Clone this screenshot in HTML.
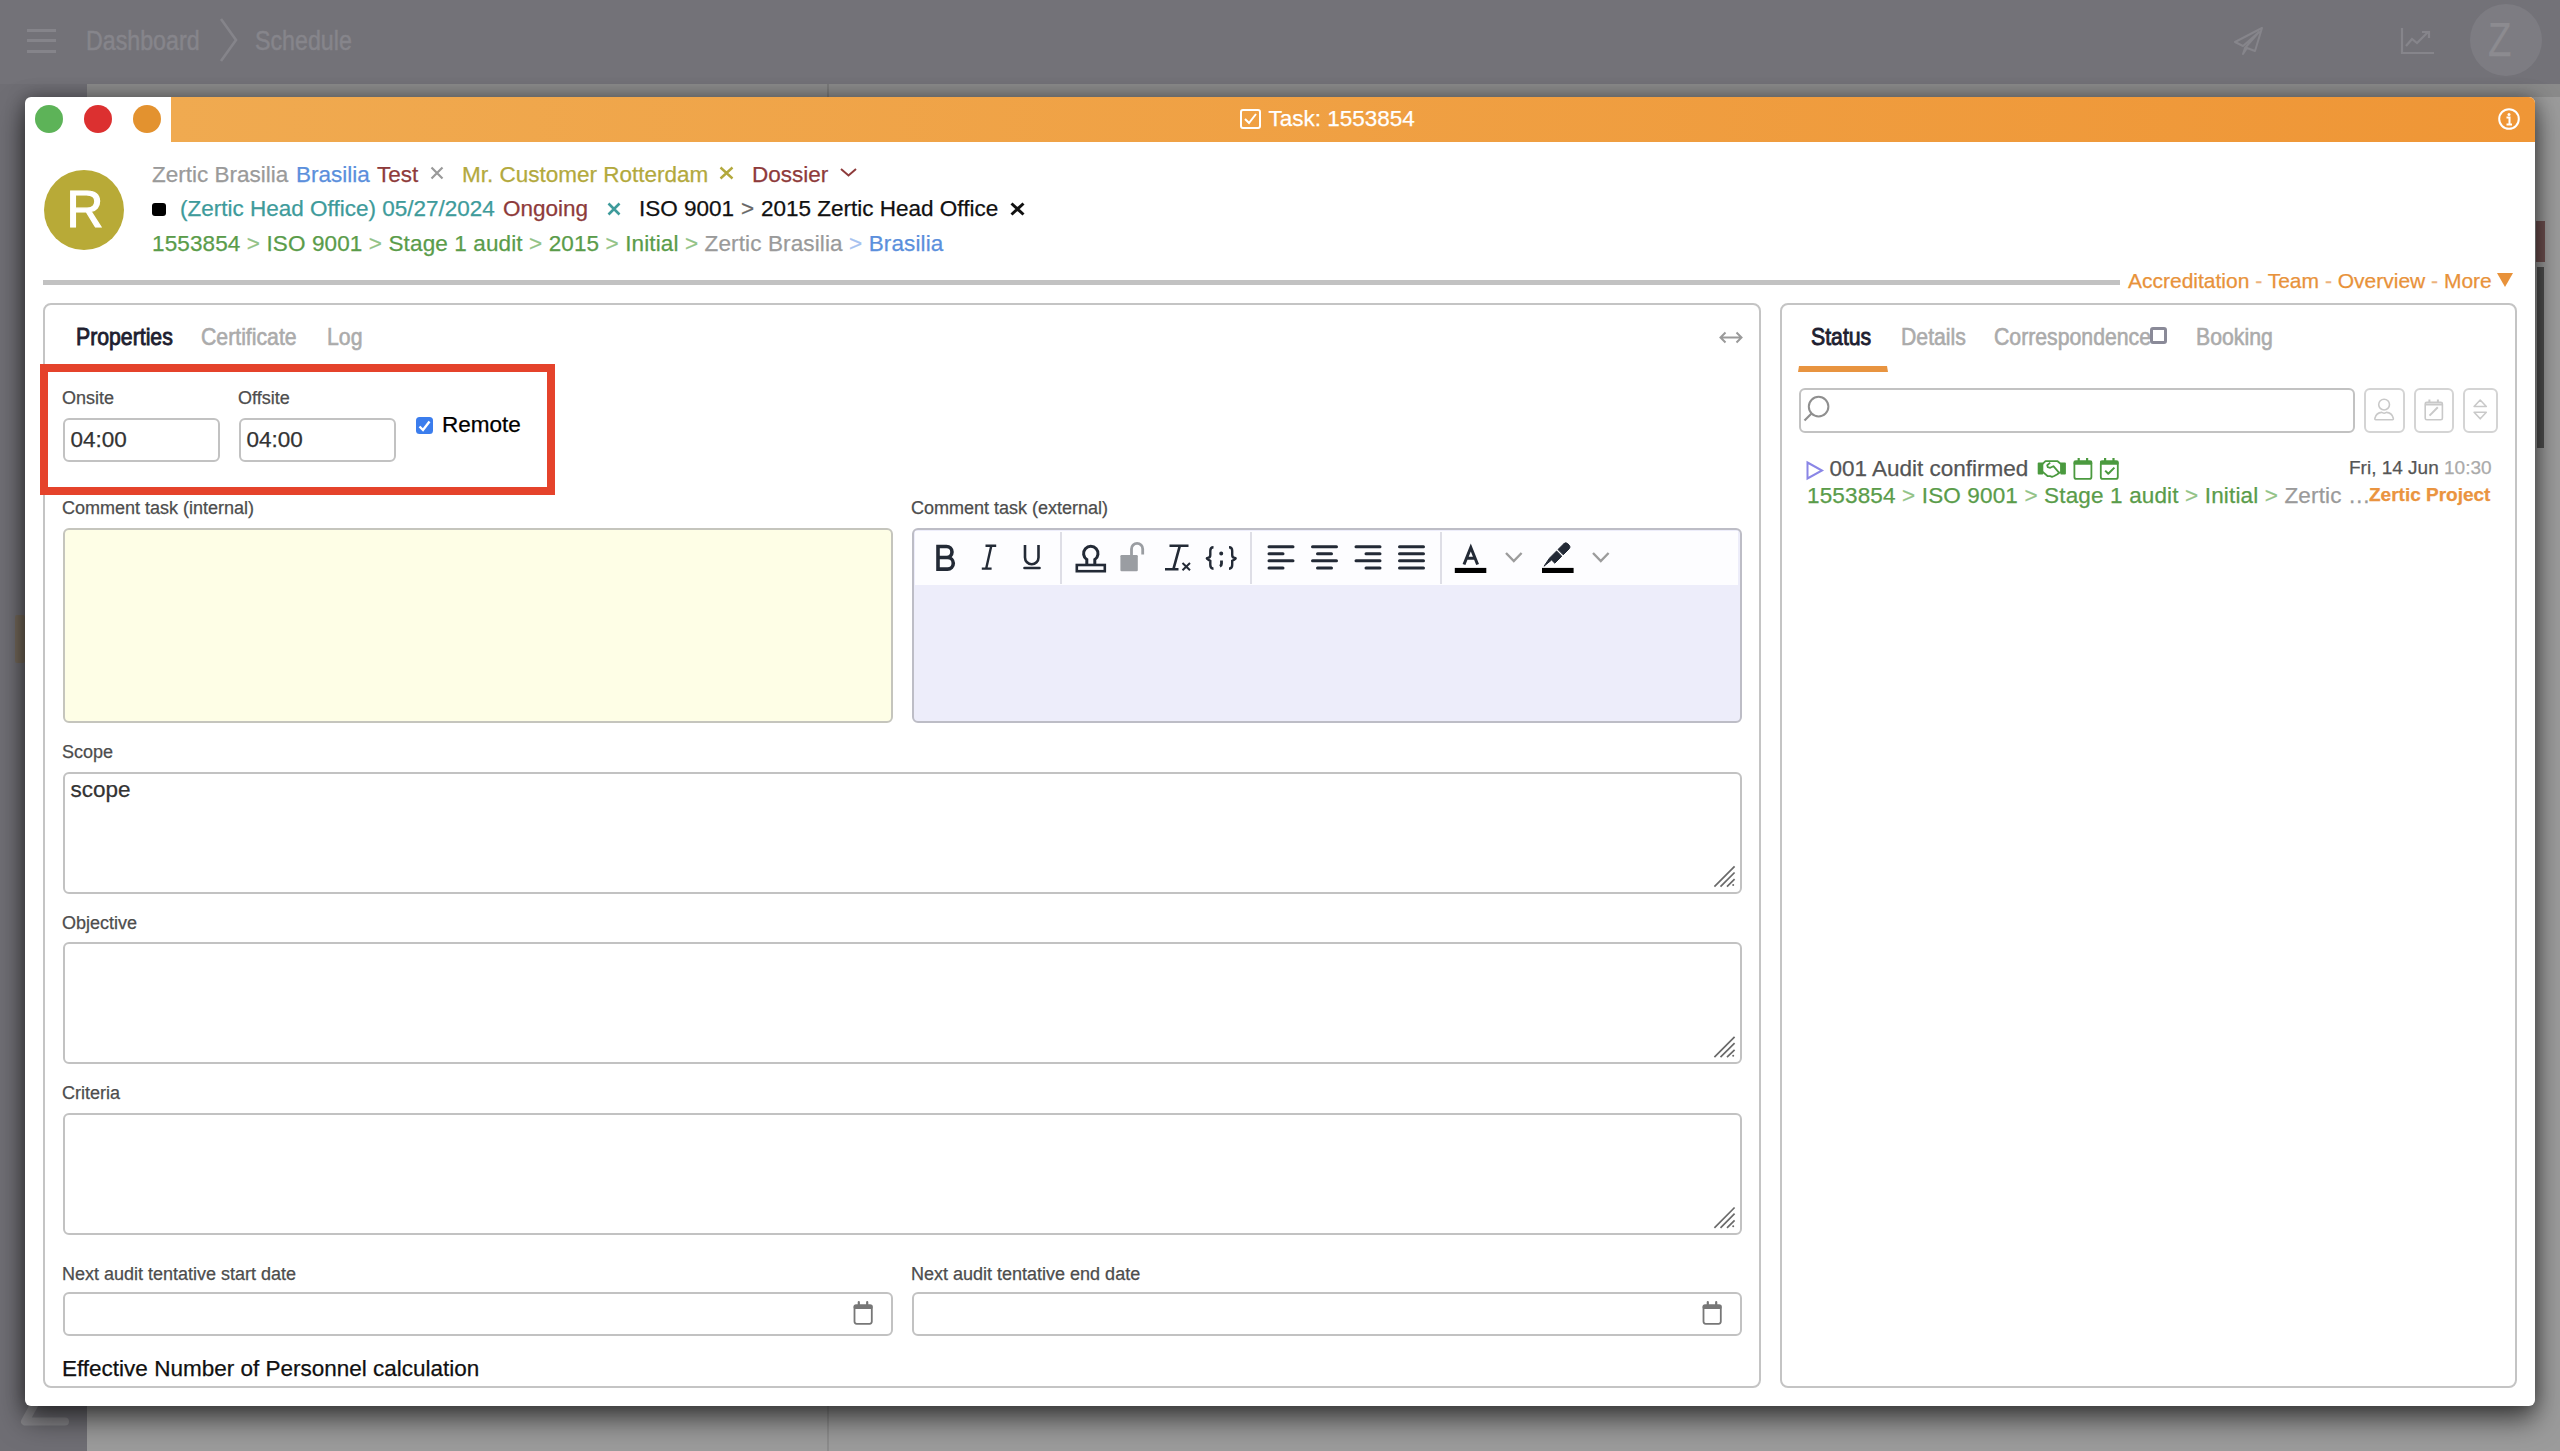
<!DOCTYPE html>
<html><head><meta charset="utf-8">
<style>
*{box-sizing:border-box;margin:0;padding:0}
html,body{width:2560px;height:1451px;overflow:hidden;font-family:"Liberation Sans",sans-serif}
body{background:#9b9b9b;position:relative}
.a{position:absolute}
.t{position:absolute;line-height:1;white-space:nowrap;-webkit-text-stroke:.25px currentColor}
.crumb{color:#86858b;font-size:27px;transform-origin:0 0;transform:scaleX(.86);-webkit-text-stroke:.5px #86858b}
.tab{font-size:24px;transform-origin:0 0;transform:scaleX(.885);color:#ababab;-webkit-text-stroke:.6px #ababab!important}
.lbl{font-size:18px;color:#4d4d4d}
.inp{position:absolute;border:2px solid #c2c2c2;border-radius:6px;background:#fff}
.panel{position:absolute;border:2px solid #c4c4c4;border-radius:8px;background:#fff}
.h{font-size:22.5px}
svg{position:absolute;overflow:visible}
</style></head><body>
<!-- background app -->
<div class="a" style="left:0;top:0;width:2560px;height:84px;background:#737278"></div>
<div class="a" style="left:0;top:84px;width:87px;height:1367px;background:#6f6e74"></div>
<div class="a" style="left:87px;top:84px;width:2473px;height:13px;background:#8a8a8a"></div>
<div class="a" style="left:827px;top:1405px;width:2px;height:46px;background:#8c8c8c"></div>
<div class="a" style="left:827px;top:84px;width:2px;height:13px;background:#7a7a7a"></div>
<div class="a" style="left:15px;top:615px;width:10px;height:48px;background:#74685a;border-radius:2px"></div>
<div class="a" style="left:2536px;top:221px;width:9px;height:41px;background:#6e5050"></div>
<div class="a" style="left:2537px;top:267px;width:7px;height:181px;background:#505050"></div>
<svg style="left:0;top:1390px" width="80" height="50"><path d="M38 8L25 31.5H65" fill="none" stroke="#868589" stroke-width="8" stroke-linejoin="round" stroke-linecap="round"/></svg>
<!-- hamburger -->
<div class="a" style="left:27px;top:29px;width:29px;height:3px;background:#85848a"></div>
<div class="a" style="left:27px;top:39px;width:29px;height:3px;background:#85848a"></div>
<div class="a" style="left:27px;top:50px;width:29px;height:3px;background:#85848a"></div>
<div class="t crumb" style="left:86px;top:28px">Dashboard</div>
<svg style="left:218px;top:18px" width="24" height="46"><path d="M3 1 L18 22 L3 43" stroke="#85848a" stroke-width="2.6" fill="none"/></svg>
<div class="t crumb" style="left:255px;top:28px">Schedule</div>
<!-- top right icons -->
<svg style="left:2234px;top:27px" width="30" height="28" viewBox="0 0 30 28"><path d="M28 1 L1 15 L9 19 L25 5 L11 21 L9 27 L13 21 L21 24 Z" fill="none" stroke="#86858b" stroke-width="2" stroke-linejoin="round"/></svg>
<svg style="left:2401px;top:28px" width="34" height="26" viewBox="0 0 34 26"><path d="M1 0 V25 H33 M5 18 L11 11 L16 15 L27 4 M21 4 H28 V10" fill="none" stroke="#86858b" stroke-width="2.2"/></svg>
<div class="a" style="left:2470px;top:4px;width:72px;height:72px;border-radius:50%;background:#7d7c82"></div>
<div class="t" style="left:2488px;top:16px;font-size:48px;color:#8c8b90;transform:scaleX(.8);transform-origin:0 0">Z</div>

<!-- modal -->
<div class="a" style="left:25px;top:97px;width:2510px;height:1309px;background:#fff;border-radius:6px;box-shadow:0 14px 28px rgba(0,0,0,.55),0 0 18px rgba(0,0,0,.35)"></div>
<div class="a" style="left:171px;top:97px;width:2364px;height:45px;background:linear-gradient(90deg,#f0aa50,#ef9636);border-top-right-radius:6px"></div>
<div class="a" style="left:35px;top:105px;width:28px;height:28px;border-radius:50%;background:#5db358"></div>
<div class="a" style="left:84px;top:105px;width:28px;height:28px;border-radius:50%;background:#dc3030"></div>
<div class="a" style="left:133px;top:105px;width:28px;height:28px;border-radius:50%;background:#e3922f"></div>
<svg style="left:1240px;top:109px" width="21" height="20" viewBox="0 0 21 20"><rect x="1" y="1" width="19" height="18" rx="2" fill="none" stroke="#fff" stroke-width="2"/><path d="M5 10 L9 14 L16 5" fill="none" stroke="#fff" stroke-width="2"/></svg>
<div class="t" style="left:1268.5px;top:107.8px;font-size:22.5px;color:#fff">Task: 1553854</div>
<svg style="left:2498px;top:108px" width="22" height="22" viewBox="0 0 22 22"><circle cx="11" cy="11" r="9.8" fill="none" stroke="#fff" stroke-width="2"/><circle cx="11" cy="6.5" r="1.5" fill="#fff"/><path d="M8.5 9.5h3v6.5M8.5 16.5h5.5" stroke="#fff" stroke-width="2" fill="none"/></svg>

<!-- avatar -->
<div class="a" style="left:44px;top:170px;width:80px;height:80px;border-radius:50%;background:#b8aa37"></div>
<div class="t" style="left:66.5px;top:184px;font-size:51px;color:#fff;-webkit-text-stroke:1.2px #fff">R</div>

<!-- header line 1 -->
<div class="t h" style="left:152px;top:164px;color:#9a9a9a">Zertic Brasilia</div>
<div class="t h" style="left:296px;top:164px;color:#5b8fdc">Brasilia</div>
<div class="t h" style="left:377px;top:164px;color:#8e3b3b">Test</div>
<svg style="left:430px;top:166px" width="14" height="14"><path d="M1.5 1.5L12.5 12.5M12.5 1.5L1.5 12.5" stroke="#9a9a9a" stroke-width="2.2"/></svg>
<div class="t h" style="left:462px;top:164px;color:#b3a93d">Mr. Customer Rotterdam</div>
<svg style="left:719px;top:166px" width="15" height="14"><path d="M1.5 1.5L13.5 12.5M13.5 1.5L1.5 12.5" stroke="#b3a93d" stroke-width="2.4"/></svg>
<div class="t h" style="left:752px;top:164px;color:#8e3b3b">Dossier</div>
<svg style="left:840px;top:168px" width="17" height="9"><path d="M1 1L8.5 7.5L16 1" stroke="#8e3b3b" stroke-width="2" fill="none"/></svg>
<!-- header line 2 -->
<div class="a" style="left:152px;top:203px;width:14px;height:13px;background:#000;border-radius:3px"></div>
<div class="t h" style="left:180px;top:197.5px;color:#3e9b9b">(Zertic Head Office) 05/27/2024</div>
<div class="t h" style="left:503px;top:197.5px;color:#8e3b3b">Ongoing</div>
<svg style="left:607px;top:202px" width="14" height="14"><path d="M1.5 1.5L12.5 12.5M12.5 1.5L1.5 12.5" stroke="#3e9b9b" stroke-width="2.6"/></svg>
<div class="t h" style="left:639px;top:197.5px;color:#111">ISO 9001</div>
<div class="t h" style="left:741px;top:197.5px;color:#666">&gt;</div>
<div class="t h" style="left:761px;top:197.5px;color:#111">2015 Zertic Head Office</div>
<svg style="left:1010px;top:202px" width="15" height="14"><path d="M1.5 1.5L13.5 12.5M13.5 1.5L1.5 12.5" stroke="#111" stroke-width="3"/></svg>
<!-- header line 3 -->
<div class="t h" style="left:152px;top:233px;color:#5a9c4a;letter-spacing:.12px">1553854 <span style="color:#92c387">&gt;</span> ISO 9001 <span style="color:#92c387">&gt;</span> Stage 1 audit <span style="color:#92c387">&gt;</span> 2015 <span style="color:#92c387">&gt;</span> Initial <span style="color:#92c387">&gt;</span> <span style="color:#9a9a9a">Zertic Brasilia</span> <span style="color:#a6c2f0">&gt;</span> <span style="color:#5b8fdc">Brasilia</span></div>

<!-- separator + links -->
<div class="a" style="left:43px;top:280px;width:2077px;height:4.5px;background:#c2c2c2"></div>
<div class="t" style="left:2128px;top:269.6px;font-size:21px;color:#e8923a">Accreditation <span style="color:#ecb27c">-</span> Team <span style="color:#ecb27c">-</span> Overview <span style="color:#ecb27c">-</span> More</div>
<svg style="left:2497px;top:273px" width="16" height="15"><path d="M0 0H16L8 14Z" fill="#e8923a"/></svg>

<!-- panels -->
<div class="panel" style="left:43px;top:302.5px;width:1718px;height:1085.5px"></div>
<div class="panel" style="left:1779.5px;top:302.5px;width:1737.5px;width:737.5px;height:1085.5px"></div>

<!-- LEFT TABS -->
<div class="t tab" style="left:76px;top:325.4px;color:#1e1e30;-webkit-text-stroke:.9px #1e1e30!important">Properties</div>
<div class="t tab" style="left:201px;top:325.4px">Certificate</div>
<div class="t tab" style="left:327px;top:325.4px">Log</div>
<svg style="left:1719px;top:331px" width="24" height="13" viewBox="0 0 24 13"><path d="M1.5 6.5H22.5M6.5 1.5L1.5 6.5L6.5 11.5M17.5 1.5L22.5 6.5L17.5 11.5" stroke="#9a9a9a" stroke-width="2" fill="none"/></svg>

<!-- red box -->
<div class="a" style="left:40px;top:363.5px;width:515px;height:131.5px;border:8.5px solid #e5432b"></div>
<div class="t lbl" style="left:62px;top:389.3px">Onsite</div>
<div class="t lbl" style="left:238px;top:389.3px">Offsite</div>
<div class="inp" style="left:62.5px;top:417.5px;width:157px;height:44px"></div>
<div class="inp" style="left:238.5px;top:417.5px;width:157px;height:44px"></div>
<div class="t h" style="left:70.5px;top:428.5px;color:#333">04:00</div>
<div class="t h" style="left:246.5px;top:428.5px;color:#333">04:00</div>
<div class="a" style="left:415.5px;top:416.5px;width:17px;height:17.5px;background:#3b7ded;border-radius:3.5px"></div>
<svg style="left:415.5px;top:416.5px" width="17" height="18"><path d="M3.5 9.5L7 13L13.5 4.5" stroke="#fff" stroke-width="2.4" fill="none"/></svg>
<div class="t h" style="left:442px;top:413.7px;color:#000">Remote</div>

<!-- comment areas -->
<div class="t lbl" style="left:62px;top:499.3px">Comment task (internal)</div>
<div class="t lbl" style="left:911px;top:499.3px">Comment task (external)</div>
<div class="inp" style="left:62.5px;top:527.5px;width:830.5px;height:195.5px;background:#fefee6;border-color:#c5c5bd"></div>
<div class="inp" style="left:911.5px;top:527.5px;width:830.5px;height:195.5px;background:#ededfa;border-color:#bdbdc6"></div>
<div class="a" style="left:915px;top:531px;width:823px;height:54px;background:#fdfdff"></div>
<!-- toolbar separators -->
<div class="a" style="left:1060px;top:532px;width:2px;height:52px;background:#dedee6"></div>
<div class="a" style="left:1250px;top:532px;width:2px;height:52px;background:#dedee6"></div>
<div class="a" style="left:1440px;top:532px;width:2px;height:52px;background:#dedee6"></div>
<svg style="left:0;top:0" width="2560" height="1451" viewBox="0 0 2560 1451">
<g fill="none" stroke="#232a36" stroke-linecap="butt">
 <!-- B -->
 <path d="M938 546.5H946.5a5.5 5.5 0 0 1 0 11H938ZM938 557.5H947.5a5.8 5.8 0 0 1 0 11.6H938Z" stroke-width="3.6"/>
 <!-- I -->
 <path d="M985.5 545.8H996.2M981.8 568.6H991.6M991.3 545.8L986.2 568.6" stroke-width="2.4"/>
 <!-- U -->
 <path d="M1025 545V557.5a6.75 6.75 0 0 0 13.5 0V545" stroke-width="2.6"/>
 <path d="M1024.5 568H1039.5" stroke-width="2.6" stroke-linecap="round"/>
 <!-- stamp -->
 <path d="M1086.8 564V559.5a7.2 7.2 0 1 1 8 0V564" stroke-width="3"/>
 <rect x="1076.8" y="565" width="28" height="6.2" stroke-width="2.6"/>
 <!-- Tx -->
 <path d="M1169.5 545.8H1188.5M1179.8 545.8L1173.5 568.8M1165 569.2H1178.5" stroke-width="2.6"/>
 <path d="M1182.5 563L1190 570.2M1190 563L1182.5 570.2" stroke-width="2"/>
 <!-- {;} -->
 <path d="M1213.5 547.2q-3.2 0-3.2 3.5v4.2q0 2.8-2.6 3t2.6 3v4.2q0 3.6 3.2 3.6M1229 547.2q3.2 0 3.2 3.5v4.2q0 2.8 2.6 3t-2.6 3v4.2q0 3.6-3.2 3.6" stroke-width="2.4"/>
 <circle cx="1221.2" cy="553.5" r="1.2" fill="#232a36" stroke-width="1.6"/>
 <path d="M1221.5 560.5v3.2q0 1.8-1.6 2.6" stroke-width="2.8"/>
 <!-- align -->
 <g stroke-width="3" stroke-linecap="round">
  <path d="M1269 546.8H1293M1269 553.7H1283M1269 560.7H1293M1269 567.9H1283"/>
  <path d="M1312.5 546.8H1336.5M1317.5 553.7H1331.5M1312.5 560.7H1336.5M1317.5 567.9H1331.5"/>
  <path d="M1356 546.8H1380M1366 553.7H1380M1356 560.7H1380M1366 567.9H1380"/>
  <path d="M1399.5 546.8H1423.5M1399.5 553.7H1423.5M1399.5 560.7H1423.5M1399.5 567.9H1423.5"/>
 </g>
 <!-- A -->
 <path d="M1464 564.5L1470.8 547.5L1477.6 564.5M1466.5 558.3H1475" stroke-width="3"/>
 <!-- highlighter -->
 <path d="M1558 549.5L1564 543.6a2.6 2.6 0 0 1 3.6 0l1.6 1.6a2.6 2.6 0 0 1 0 3.6L1563.2 554.8Z" fill="#232a36" stroke-width="1"/>
 <path d="M1556.6 551L1561.8 556.2L1554.8 563.2L1551.6 560L1544 566.2L1549.2 558.6L1549.6 558Z" fill="#232a36" stroke-width="1"/>
</g>
<!-- lock -->
<rect x="1120.4" y="555" width="17.4" height="16.2" rx="1.2" fill="#9a9da2"/>
<path d="M1131.5 555V549a5.6 5.6 0 0 1 11.2 0v5.4" fill="none" stroke="#9a9da2" stroke-width="2.8"/>
<!-- color bars -->
<rect x="1454.8" y="567.9" width="31.5" height="5.1" fill="#000"/>
<rect x="1542" y="567.9" width="31.6" height="5.1" fill="#000"/>
<!-- chevrons -->
<path d="M1506 553L1513.8 561L1521.6 553M1593 553L1600.8 561L1608.6 553" fill="none" stroke="#9c9c9c" stroke-width="2.4"/>
</svg>


<!-- Scope / Objective / Criteria -->
<div class="t lbl" style="left:62px;top:743px">Scope</div>
<div class="inp" style="left:62.5px;top:771.5px;width:1679px;height:122px"></div>
<div class="t h" style="left:70.5px;top:779.4px;color:#333">scope</div>
<div class="t lbl" style="left:62px;top:913.5px">Objective</div>
<div class="inp" style="left:62.5px;top:942px;width:1679px;height:122px"></div>
<div class="t lbl" style="left:62px;top:1084px">Criteria</div>
<div class="inp" style="left:62.5px;top:1113px;width:1679px;height:122px"></div>
<svg style="left:0;top:0" width="2560" height="1451" viewBox="0 0 2560 1451"><path d="M1714.4 886.6L1734.6 866.3000000000001M1720.5 886.6L1734.6 872.5M1727 886.6L1734.6 879.2" stroke="#6a6a6a" stroke-width="1.7"/><circle cx="1733.2" cy="885.1" r="1" fill="#6a6a6a"/><path d="M1714.4 1057.2L1734.6 1036.9M1720.5 1057.2L1734.6 1043.1000000000001M1727 1057.2L1734.6 1049.8" stroke="#6a6a6a" stroke-width="1.7"/><circle cx="1733.2" cy="1055.7" r="1" fill="#6a6a6a"/><path d="M1714.4 1227.8L1734.6 1207.5M1720.5 1227.8L1734.6 1213.7M1727 1227.8L1734.6 1220.3999999999999" stroke="#6a6a6a" stroke-width="1.7"/><circle cx="1733.2" cy="1226.3" r="1" fill="#6a6a6a"/></svg>

<!-- dates -->
<div class="t lbl" style="left:62px;top:1264.8px">Next audit tentative start date</div>
<div class="t lbl" style="left:911px;top:1264.8px">Next audit tentative end date</div>
<div class="inp" style="left:62.5px;top:1292.4px;width:830px;height:44px"></div>
<div class="inp" style="left:911.5px;top:1292.4px;width:830px;height:44px"></div>
<svg style="left:0;top:0" width="2560" height="1451" viewBox="0 0 2560 1451"><rect x="854.5" y="1305.3" width="17.3" height="18.5" rx="2.2" fill="none" stroke="#777" stroke-width="1.8"/><rect x="853.6" y="1304.6" width="19" height="4.4" rx="1.5" fill="#777"/><path d="M858.8000000000001 1302.2V1305.5M867.2 1302.2V1305.5" stroke="#777" stroke-width="2.2" stroke-linecap="round"/><rect x="1703.5" y="1305.3" width="17.3" height="18.5" rx="2.2" fill="none" stroke="#777" stroke-width="1.8"/><rect x="1702.6" y="1304.6" width="19" height="4.4" rx="1.5" fill="#777"/><path d="M1707.8 1302.2V1305.5M1716.1999999999998 1302.2V1305.5" stroke="#777" stroke-width="2.2" stroke-linecap="round"/></svg>
<div class="t h" style="left:62px;top:1357.7px;color:#111">Effective Number of Personnel calculation</div>

<!-- RIGHT PANEL -->
<div class="t tab" style="left:1811px;top:325.4px;color:#1e1e30;-webkit-text-stroke:.9px #1e1e30!important">Status</div>
<div class="t tab" style="left:1901px;top:325.4px">Details</div>
<div class="t tab" style="left:1994px;top:325.4px">Correspondence</div>
<div class="a" style="left:2150px;top:327px;width:17px;height:17px;border:3px solid #8a8a98;border-radius:3px"></div>
<div class="t tab" style="left:2196px;top:325.4px">Booking</div>
<div class="a" style="left:1798px;top:366px;width:90px;height:6px;background:#e89440;clip-path:polygon(1px 0,89px 0,90px 100%,0 100%)"></div>
<div class="inp" style="left:1798.5px;top:388px;width:556.5px;height:44.5px"></div>
<svg style="left:1802px;top:394px" width="30" height="30" viewBox="0 0 30 30"><circle cx="16.6" cy="12.6" r="9.8" fill="none" stroke="#8f8f8f" stroke-width="2"/><path d="M9.5 19.5L2.5 26.5" stroke="#8f8f8f" stroke-width="2.2"/></svg>
<div class="inp" style="left:2364px;top:388px;width:40.5px;height:44.5px;border-color:#d4d4d4"></div>
<div class="inp" style="left:2413.5px;top:388px;width:40px;height:44.5px;border-color:#d4d4d4"></div>
<div class="inp" style="left:2462.5px;top:388px;width:35px;height:44.5px;border-color:#d4d4d4"></div>
<svg style="left:0;top:0" width="2560" height="1451" viewBox="0 0 2560 1451"><g fill="none" stroke="#c9c9c9" stroke-width="1.6">
<circle cx="2384.1" cy="404.6" r="5.4"/>
<path d="M2375.5 419.8H2392.4q1.2 0 0.9-1.5q-1.4-5.7-6.8-5.9q-1.8 0.9-2.4 0.9t-2.4-0.9q-5.4 0.2-6.8 5.9q-0.3 1.5 0.9 1.5Z"/>
<rect x="2425.2" y="402.4" width="17.2" height="17.4" rx="1.6"/>
<path d="M2425.2 404.6H2442.4M2429.4 399.5V403M2437.9 399.5V403" stroke-width="2"/>
<path d="M2429.5 415.6L2437.8 407.3" stroke-width="2"/>
<path d="M2480.2 400L2486.3 406.5H2474.1Z M2480.2 418.8L2486.3 412.3H2474.1Z" stroke-linejoin="round"/>
</g></svg>

<!-- status item -->
<svg style="left:1806px;top:461px" width="18" height="19"><path d="M1.5 1.5L16 9.5L1.5 17.5Z" fill="none" stroke="#8a86e6" stroke-width="2"/></svg>
<div class="t h" style="left:1829.5px;top:458px;color:#555">001 Audit confirmed</div>
<svg style="left:0;top:0" width="2560" height="1451" viewBox="0 0 2560 1451"><g fill="none" stroke="#4b9a3f" stroke-width="1.8" stroke-linejoin="round">
<path d="M2038.6 463.3H2042.4V473.6H2038.6Z" fill="#4b9a3f"/>
<path d="M2061.2 463.3H2065V473.6H2061.2Z" fill="#4b9a3f"/>
<path d="M2042.4 464.2L2045.5 461.2H2057.6L2061.2 464.2V471.8L2059.2 472.8"/>
<path d="M2042.4 471.6L2047.8 476.2H2050.2L2052 476.8L2054.2 476L2057.4 474.2L2059.2 472.8L2053.4 466.2L2050.2 467.8L2047.8 467.2L2047.2 465.2L2050.2 462.6"/>
<rect x="2074.4" y="461.5" width="17" height="17.4" rx="2"/>
<rect x="2073.6" y="460.6" width="18.6" height="4.2" rx="1.4" fill="#4b9a3f" stroke="none"/>
<path d="M2078.7 457.9V461.5M2087.1 457.9V461.5" stroke-width="2.2"/>
<rect x="2100.8" y="461.5" width="17" height="17.4" rx="2"/>
<rect x="2100" y="460.6" width="18.6" height="4.2" rx="1.4" fill="#4b9a3f" stroke="none"/>
<path d="M2105.1 457.9V461.5M2113.5 457.9V461.5" stroke-width="2.2"/>
<path d="M2105.2 470.6L2108.3 473.8L2114.4 467.6" stroke-width="2"/>
</g></svg>
<div class="t" style="left:2349px;top:458px;font-size:19px;color:#555">Fri, 14 Jun <span style="color:#aaa">10:30</span></div>
<div class="t h" style="left:1807px;top:485.2px;color:#5a9c4a;letter-spacing:.15px">1553854 <span style="color:#92c387">&gt;</span> ISO 9001 <span style="color:#92c387">&gt;</span> Stage 1 audit <span style="color:#92c387">&gt;</span> Initial <span style="color:#92c387">&gt;</span> <span style="color:#9a9a9a">Zertic …</span></div>
<div class="t" style="left:2369px;top:485.2px;font-size:19px;font-weight:700;color:#ea9440">Zertic Project</div>
</body></html>
